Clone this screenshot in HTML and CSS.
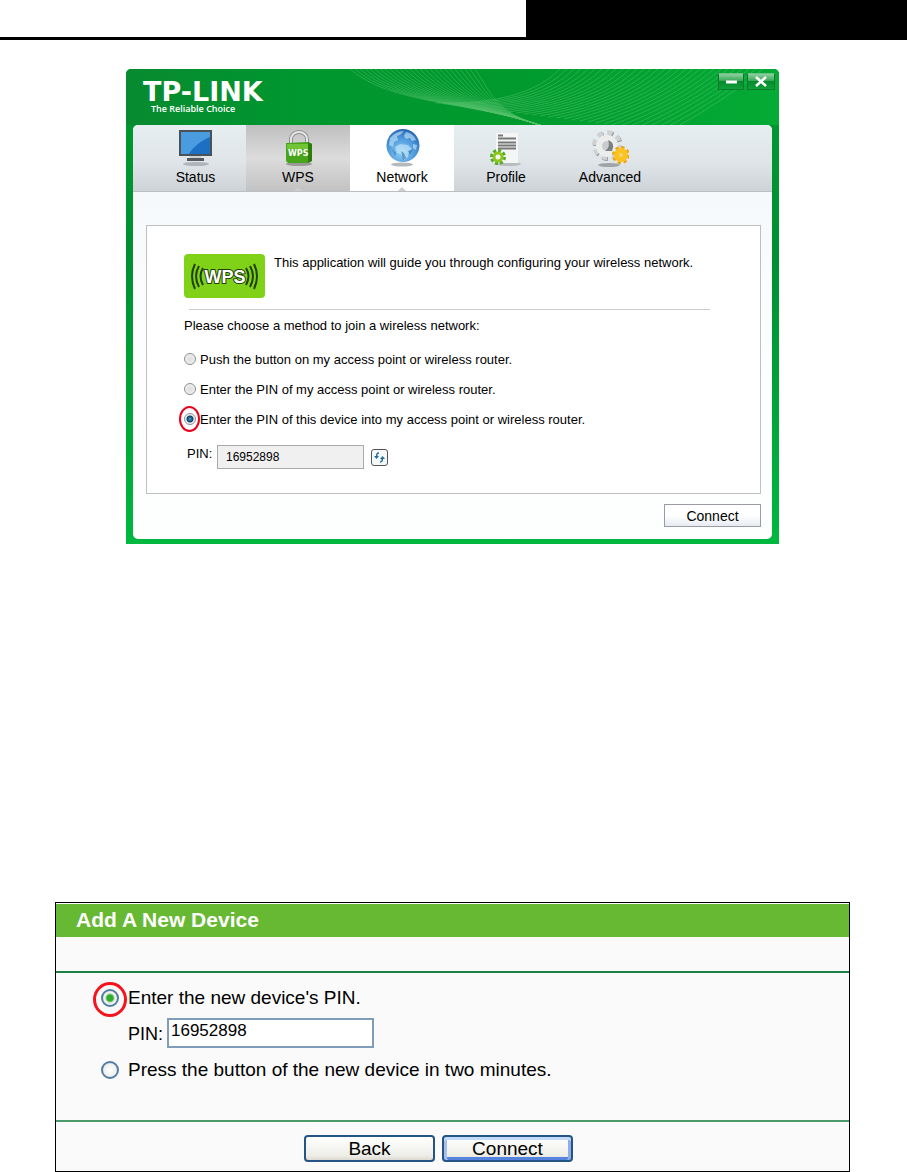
FILE: index.html
```html
<!DOCTYPE html>
<html lang="en">
<head>
<meta charset="utf-8">
<title>WPS configuration</title>
<link rel="stylesheet" href="styles.css">
</head>
<body>
<div class="pagehead"><span></span></div>

<div class="window">
  <div class="titlebar">
    <svg class="waves" id="waves" viewBox="0 0 653 56" preserveAspectRatio="none"></svg>
    <div class="brand">
      <strong>TP-LINK</strong>
      <em>The Reliable Choice</em>
    </div>
    <div class="winbtns">
      <button type="button" aria-label="Minimize"><svg width="24" height="16"><path d="M7 8h11" stroke="#fff" stroke-width="3"/></svg></button>
      <button type="button" aria-label="Close"><svg width="26" height="16"><path d="M8 3l10 9M18 3l-10 9" stroke="#fff" stroke-width="2.500"/></svg></button>
    </div>
  </div>

  <div class="inner">
    <div class="tabs">
      <button type="button" class="tab first">
        <svg width="38" height="38" viewBox="0 0 38 38">
          <ellipse cx="19" cy="35" rx="13" ry="2" fill="#aeb5b9"/>
          <path d="M2 1h33v26H2z" fill="#4b5257"/>
          <path d="M4 3h29v22H4z" fill="#2176c4"/>
          <path d="M4 3h29v5Q19 14 12 25H4z" fill="#4a9be0"/>
          <path d="M33 8Q19 14 12 25h21z" fill="#1d6fc4"/>
          <path d="M13 27h11v2H13z" fill="#ccd0d2"/>
          <path d="M10 29h17v3H10z" fill="#555b60"/>
        </svg>
        <span>Status</span>
      </button>
      <button type="button" class="tab wps">
        <svg width="38" height="38" viewBox="0 0 38 38">
          <ellipse cx="20" cy="35" rx="13" ry="2" fill="#999"/>
          <path d="M12 16V10a8 7 0 0 1 16 0v6" fill="none" stroke="#8f8f8f" stroke-width="4"/>
          <path d="M12 16V10a8 7 0 0 1 16 0v6" fill="none" stroke="#e6e6e6" stroke-width="2"/>
          <path d="M7 14l22 -1 4 2v17l-4 2H9l-2 -2z" fill="#48a51b"/>
          <path d="M29 13l4 2v17l-4 2z" fill="#2d7c10"/>
          <path d="M8 15h21v5H8z" fill="#71c535"/>
          <text x="9" y="27" class="lock">WPS</text>
        </svg>
        <span>WPS</span>
      </button>
      <button type="button" class="tab on">
        <svg width="38" height="38" viewBox="0 0 38 38">
          <defs><radialGradient id="sea" cx="45%" cy="70%" r="70%"><stop offset="0" stop-color="#8fd3f8"/><stop offset=".6" stop-color="#4f98db"/><stop offset="1" stop-color="#2466b4"/></radialGradient></defs>
          <ellipse cx="19" cy="35.500" rx="11" ry="2" fill="#b5b9bc"/>
          <circle cx="20" cy="16.500" r="16.500" fill="url(#sea)"/>
          <path d="M7 9Q13 2 21 2l-4 4 -3 1 1 4 -4 2 -1 5 -4 -2zM23 3q7 1 10 8l-4 1 -2 -3 -4 1 -2 -3zM12 18l5 -3 8 1 4 4 -3 3 -1 5 -4 3 -3 -6 -4 -1zM30 15l4 1 -1 5 -3 -2z" fill="#cbeafc" opacity=".6"/>
          <path d="M18 22l3 2 2 5 -3 2zM9 20l4 4 -1 3zM25 22l5 -2 -3 6z" fill="#2d6cad" opacity=".6"/>
        </svg>
        <span>Network</span>
      </button>
      <button type="button" class="tab">
        <svg width="38" height="38" viewBox="0 0 38 38">
          <ellipse cx="22" cy="35" rx="12" ry="2" fill="#b8bdbf"/>
          <path d="M9 4h22v30H9z" fill="#f4f6f6"/>
          <path d="M11 6.500h5M11 9.500h18M11 13.500h18M11 16.500h18M11 19.500h18" stroke="#777" stroke-width="2"/>
          <circle cx="11" cy="28" r="6.500" fill="none" stroke="#55aa2b" stroke-width="3" stroke-dasharray="3 2"/>
          <circle cx="11" cy="28" r="4" fill="#f4f6f6" stroke="#8fc61c" stroke-width="3"/>
        </svg>
        <span>Profile</span>
      </button>
      <button type="button" class="tab">
        <svg width="38" height="38" viewBox="0 0 38 38">
          <ellipse cx="18" cy="36" rx="11" ry="2" fill="#9fa4a6"/>
          <circle cx="17" cy="17" r="12" fill="none" stroke="#9a9c9e" stroke-width="6" stroke-dasharray="5 4.400"/>
          <circle cx="16" cy="16" r="12" fill="none" stroke="#cfd1d2" stroke-width="6" stroke-dasharray="5 4.400"/>
          <circle cx="16" cy="17" r="8" fill="#c9cbcd" stroke="#eceded" stroke-width="6"/>
          <path d="M17 11q8 3 4 11l-7 0q6 -4 3 -11" fill="#7d8083"/>
          <circle cx="30" cy="26" r="7" fill="none" stroke="#eba613" stroke-width="4" stroke-dasharray="3 2.500"/>
          <circle cx="30" cy="26" r="4.500" fill="#f0d478" stroke="#fbc322" stroke-width="5"/>
        </svg>
        <span>Advanced</span>
      </button>
    </div>

    <form class="panel">
      <div class="intro">
        <svg width="81" height="44" viewBox="0 0 81 44">
          <rect width="81" height="44" rx="4" fill="#80d219"/>
          <g fill="none" stroke="#20400a" stroke-width="2">
            <path d="M19 14q-5 8 0 17M15 12q-6 10 0 21M11 10q-6 12 0 25"/>
            <path d="M62 14q5 8 0 17M66 12q6 10 0 21M70 10q6 12 0 25"/>
          </g>
          <text x="41" y="29" text-anchor="middle" class="wpslogo">WPS</text>
        </svg>
        <p>This application will guide you through configuring your wireless network.</p>
      </div>
      <div class="choose">Please choose a method to join a wireless network:</div>
      <label class="opt"><input type="radio" name="method">Push the button on my access point or wireless router.</label>
      <label class="opt"><input type="radio" name="method">Enter the PIN of my access point or wireless router.</label>
      <label class="opt ring"><input type="radio" name="method" checked>Enter the PIN of this device into my access point or wireless router.</label>
      <div class="pin">
        <label for="pin1">PIN:</label>
        <input type="text" id="pin1" value="16952898" readonly>
        <button type="button" aria-label="Refresh PIN"><svg width="17" height="17" viewBox="0 0 17 17"><path d="M8 4Q5 4 6 8M9 13q3 0 2 -4" fill="none" stroke="#256d98" stroke-width="1.500"/><path d="M3 7h5l-2.500 3zM9 10h5l-2.500 -3z" fill="#256d98"/></svg></button>
      </div>
    </form>
    <div class="foot"><button type="button">Connect</button></div>
  </div>
</div>

<form class="device">
  <h2>Add A New Device</h2>
  <div class="fields">
    <label class="opt ring"><input type="radio" name="add" checked>Enter the new device's PIN.</label>
    <div class="pin">
      <label for="pin2">PIN:</label>
      <input type="text" id="pin2" value="16952898">
    </div>
    <label class="opt"><input type="radio" name="add">Press the button of the new device in two minutes.</label>
  </div>
  <div class="btns">
    <button type="button">Back</button>
    <button type="button" class="def">Connect</button>
  </div>
</form>

<script>
// thin wave lines in the title bar
var d = "", i;
for (i = 0; i < 26; i++) {
	d += "M" + (224 + i * 5) + " 0C" + (265 + i * 4) + " " + (36 - i / 2) + " " + (345 + i) + " " + (32 + i / 2) + " 417 57";
}
for (i = 0; i < 30; i++) {
	d += "M" + (434 + i * 7) + " 0Q" + (400 + i * 7) + " " + (36 - i / 4) + " " + (310 + i * 8) + " " + (34 + i);
}
document.getElementById("waves").innerHTML = '<path d="' + d + '"/>';
</script>
</body>
</html>
```
FILE: styles.css
```css
*,*::before,*::after{box-sizing:border-box;}
body{margin:0;background:#fff;color:#000;font-family:"Liberation Sans",Arial,sans-serif;font-size:13px;}
button,input{font-family:inherit;color:inherit;margin:0;}
button{padding:0;}
p,h2{margin:0;}
svg{display:block;}

.pagehead{height:40px;border-bottom:3px solid #000;display:flex;justify-content:flex-end;}
.pagehead span{width:42%;background:#000;}

.window{margin:29px 128px 0 126px;padding:0 7px 5px;border-radius:5px 5px 0 0;background:linear-gradient(#019a2e,#008f32 40%,#00b83f);position:relative;}
.titlebar{height:56px;display:flex;justify-content:space-between;align-items:flex-start;}
.window::before{content:"";position:absolute;left:0;top:0;right:0;height:56px;border-radius:5px 5px 0 0;background:linear-gradient(90deg,#088a30,#00962f 25%,#009a2e 60%,#04ab35);}
.waves{position:absolute;left:0;top:0;width:100%;height:56px;}
.waves path{fill:none;stroke:#55c26b;stroke-width:1;opacity:.5;}
.brand{position:relative;padding:10px 0 0 10px;color:#fff;}
.brand strong{display:block;font:bold 27px/26px "DejaVu Sans",sans-serif;}
.brand em{display:block;padding-left:8px;font:600 9px/8px "Open Sans",sans-serif;}
.winbtns{position:relative;display:flex;gap:3px;padding:4px 0 0;margin-right:-3px;}
.winbtns button{border:1px solid #087a2a;border-top-color:#6cc083;height:17px;background:linear-gradient(#8fcf9f,#2fa34f 50%,#068a2c 50%,#10a03a);overflow:hidden;}

.inner{position:relative;border-radius:5px;overflow:hidden;background:linear-gradient(#f3f7fa,#fdfefe 60%);}
.tabs{display:flex;height:67px;background:linear-gradient(#e6eef2,#dfe5e8 55%,#cdd3d7);border-bottom:1px solid #b9bfc2;}
.tab{width:104px;border:0;background:none;font-size:14px;line-height:16px;display:flex;flex-direction:column;align-items:center;padding-top:4px;gap:2px;}
.tab.first{width:113px;padding-left:12px;}
.tab.wps{background:linear-gradient(#bfbfbf,#dcdcdc 50%,#c2c2c2);}
.tab.on{background:#fff;}
.tab.wps,.tab.on{position:relative;}
.tab.wps::after,.tab.on::after{content:"";position:absolute;bottom:0;left:50%;margin-left:-4px;border:4px solid transparent;border-top:0;border-bottom-color:#ccc;}
.lock{font:bold 8px "DejaVu Sans",sans-serif;fill:#fff;}

.panel{margin:33px 11px 0 13px;height:269px;border:1px solid #bdbfc1;background:#fff;padding:28px 50px 0 37px;}
.intro{display:flex;gap:9px;padding-bottom:12px;position:relative;}
.intro p{line-height:18px;}
.intro::after{content:"";position:absolute;left:5px;right:0;bottom:0;border-bottom:1px solid #ccc;}
.wpslogo{font:bold 18px "Liberation Sans",sans-serif;fill:#fff;stroke:#20400a;stroke-width:2;paint-order:stroke;}
.choose{line-height:16px;padding:8px 0 16px;}
.opt{display:flex;align-items:center;position:relative;}
.panel .opt{height:18px;margin-bottom:12px;gap:4px;}
.opt input{appearance:none;border-radius:50%;}
.panel .opt input{width:12px;height:12px;border:1px solid #8e8f8f;background:radial-gradient(#ddd,#f6f6f6);}
.panel .opt input:checked{background:radial-gradient(circle,#46a3c4,#0b3c66 3px,#eef2f5 4px);}
.ring::before{content:"";position:absolute;border:2px solid #e8001c;border-radius:50%;}
.panel .ring::before{left:-5px;top:-4px;width:21px;height:26px;}
.pin{display:flex;}
.panel .pin{padding:5px 0 0 3px;}
.panel .pin label{width:30px;line-height:18px;}
.panel .pin input{width:147px;height:24px;border:1px solid #aaa;background:#f0f0f0;padding:0 8px 1px;font-size:12px;}
.panel .pin button{width:17px;height:17px;margin:4px 0 0 7px;border:1px solid #555;border-radius:3px;background:#f5f8fa;}
.panel .pin svg{margin:-1px;}
.foot{display:flex;justify-content:flex-end;padding:10px 11px 12px;}
.foot button{width:97px;height:23px;border:1px solid #999ca6;background:linear-gradient(#fff 50%,#e6ebf1);font-size:14px;}

.device{margin:358px 57px 0 55px;border:1px solid #000;background:#fafafa;font-size:19px;}
.device h2{margin-top:1px;height:33px;background:#67b832;color:#fff;font-size:21px;line-height:32px;padding-left:20px;}
.fields{margin-top:34px;border-top:2px solid #1d7f45;border-bottom:2px solid #4c9b6c;height:151px;padding:11px 0 0 45px;}
.device .opt{height:28px;gap:9px;}
.device .opt input{width:18px;height:18px;border:2px solid #547da5;background:radial-gradient(#fff,#e6e6e2);}
.device .opt input:checked{background:radial-gradient(circle,#2fae2b 3px,#f0f1ee 5px);}
.device .ring::before{left:-8px;top:-2px;width:34px;height:35px;border:3px solid #f5141d;}
.device .pin{padding:6px 0 8px 27px;gap:5px;font-size:18px;}
.device .pin label{line-height:32px;width:34px;height:30px;}
.device .pin input{width:207px;height:30px;border:2px solid #7f9db9;background:#fff;padding:0 2px 4px;font-size:17px;}
.btns{display:flex;justify-content:center;gap:7px;padding:13px 28px 9px 0;}
.btns button{width:131px;height:27px;border:2px solid #245585;border-radius:4px;background:linear-gradient(#fff,#eeeee8 80%,#dcd9d0);font-size:19px;line-height:20px;}
.btns .def{box-shadow:inset 0 3px #c3dbfb,inset 3px 0 #a5c0ee,inset -3px 0 #8fade8,inset 0 -3px #5683dd;}
```
